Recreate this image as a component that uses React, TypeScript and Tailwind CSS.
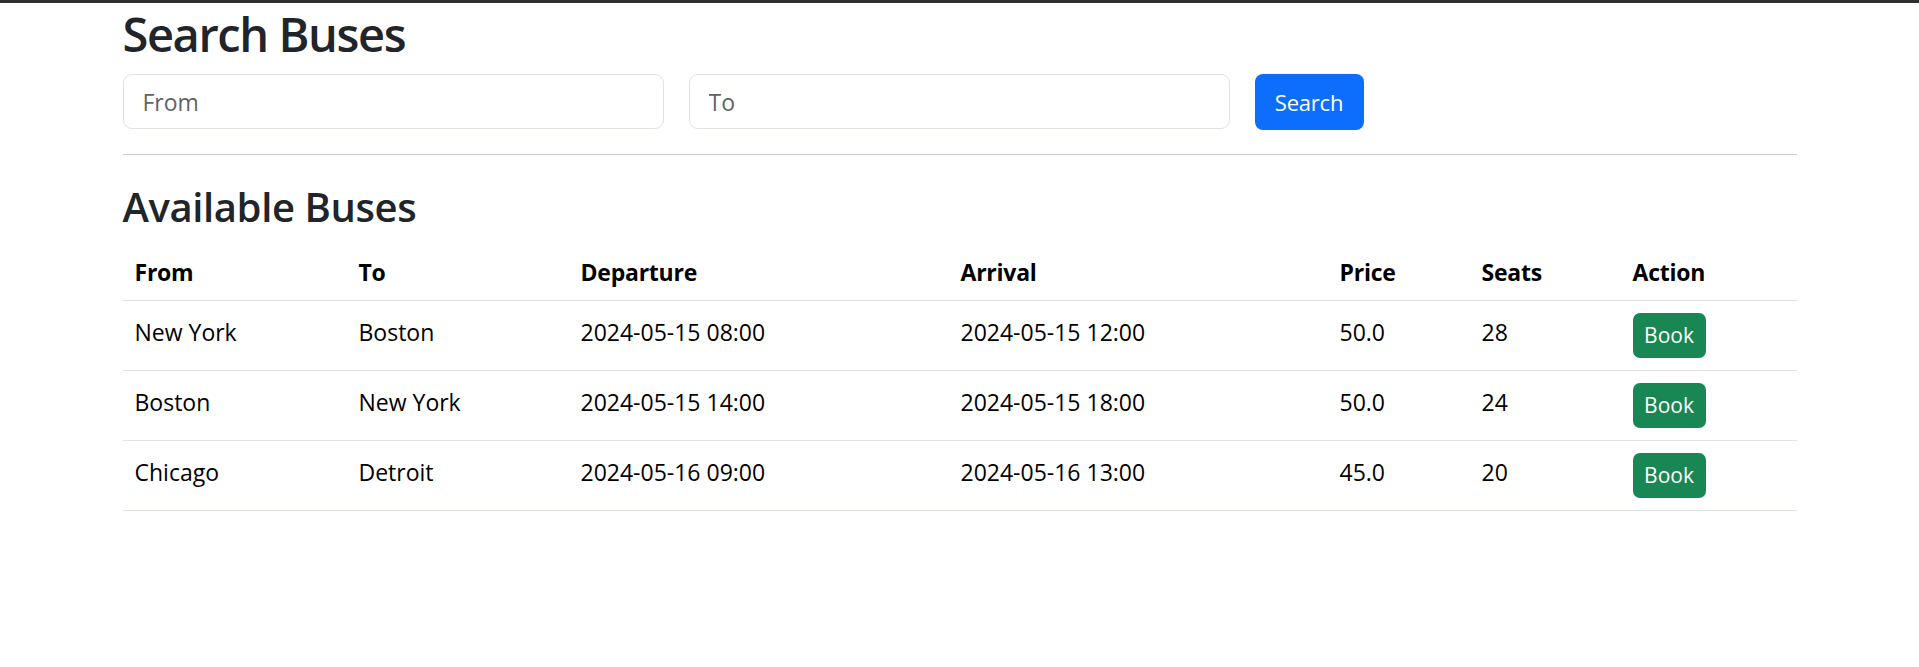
import { useState } from "react";

interface Bus {
  id: number;
  from: string;
  to: string;
  departure: string;
  arrival: string;
  price: string;
  seats: number;
}

const buses: Bus[] = [
  { id: 1, from: "New York", to: "Boston", departure: "2024-05-15 08:00", arrival: "2024-05-15 12:00", price: "50.0", seats: 28 },
  { id: 2, from: "Boston", to: "New York", departure: "2024-05-15 14:00", arrival: "2024-05-15 18:00", price: "50.0", seats: 24 },
  { id: 3, from: "Chicago", to: "Detroit", departure: "2024-05-16 09:00", arrival: "2024-05-16 13:00", price: "45.0", seats: 20 },
];

const headers = ["From", "To", "Departure", "Arrival", "Price", "Seats", "Action"];

export default function App() {
  const [from, setFrom] = useState("");
  const [to, setTo] = useState("");

  return (
    <div className="min-h-screen bg-white font-['Open_Sans',sans-serif]">
      <div className="h-[3px] bg-[#2e2f31]" />
      <div className="mx-auto max-w-[1674px] pt-[3px]">
        <h1 className="text-[47px] leading-[1.2] font-semibold tracking-[-0.03em] text-[#212529]">
          Search Buses
        </h1>

        <div className="mt-[12px] flex gap-[25px]">
          <input
            value={from}
            onChange={(e) => setFrom(e.target.value)}
            type="text"
            placeholder="From"
            className="h-[55px] w-[541px] rounded-[9px] border border-[#dee2e6] px-[19px] text-[23px] text-[#212529] placeholder:text-[#5f6368] focus:outline-none"
          />
          <input
            value={to}
            onChange={(e) => setTo(e.target.value)}
            type="text"
            placeholder="To"
            className="h-[55px] w-[541px] rounded-[9px] border border-[#dee2e6] px-[19px] text-[23px] text-[#212529] placeholder:text-[#5f6368] focus:outline-none"
          />
          <button className="h-[56px] w-[109px] rounded-[8px] bg-[#0d6efd] text-[22px] tracking-[-0.01em] text-white">
            Search
          </button>
        </div>

        <hr className="mt-[24px] border-t border-[#cbcccd]" />

        <h2 className="mt-[28px] text-[40px] leading-[1.2] font-semibold tracking-[-0.01em] text-[#212529]">
          Available Buses
        </h2>

        <table className="mt-[14px] w-full table-fixed border-collapse text-left text-[23px] leading-[1.5] text-black">
          <colgroup>
            <col className="w-[224px]" />
            <col className="w-[222px]" />
            <col className="w-[380px]" />
            <col className="w-[379px]" />
            <col className="w-[142px]" />
            <col className="w-[151px]" />
            <col className="w-[176px]" />
          </colgroup>
          <thead>
            <tr className="border-b border-[#dee2e6]">
              {headers.map((h) => (
                <th key={h} className="px-[12px] py-[10px] font-bold tracking-[-0.01em]">
                  {h}
                </th>
              ))}
            </tr>
          </thead>
          <tbody>
            {buses.map((bus) => (
              <tr key={bus.id} className="border-b border-[#dee2e6] align-top">
                <td className="px-[12px] pt-[14px] pb-[12px]">{bus.from}</td>
                <td className="px-[12px] pt-[14px] pb-[12px]">{bus.to}</td>
                <td className="px-[12px] pt-[14px] pb-[12px]">{bus.departure}</td>
                <td className="px-[12px] pt-[14px] pb-[12px]">{bus.arrival}</td>
                <td className="px-[12px] pt-[14px] pb-[12px]">{bus.price}</td>
                <td className="px-[12px] pt-[14px] pb-[12px]">{bus.seats}</td>
                <td className="px-[12px] py-[12px]">
                  <button className="h-[45px] w-[73px] rounded-[7px] bg-[#198754] text-[21px] text-white">
                    Book
                  </button>
                </td>
              </tr>
            ))}
          </tbody>
        </table>
      </div>
    </div>
  );
}
